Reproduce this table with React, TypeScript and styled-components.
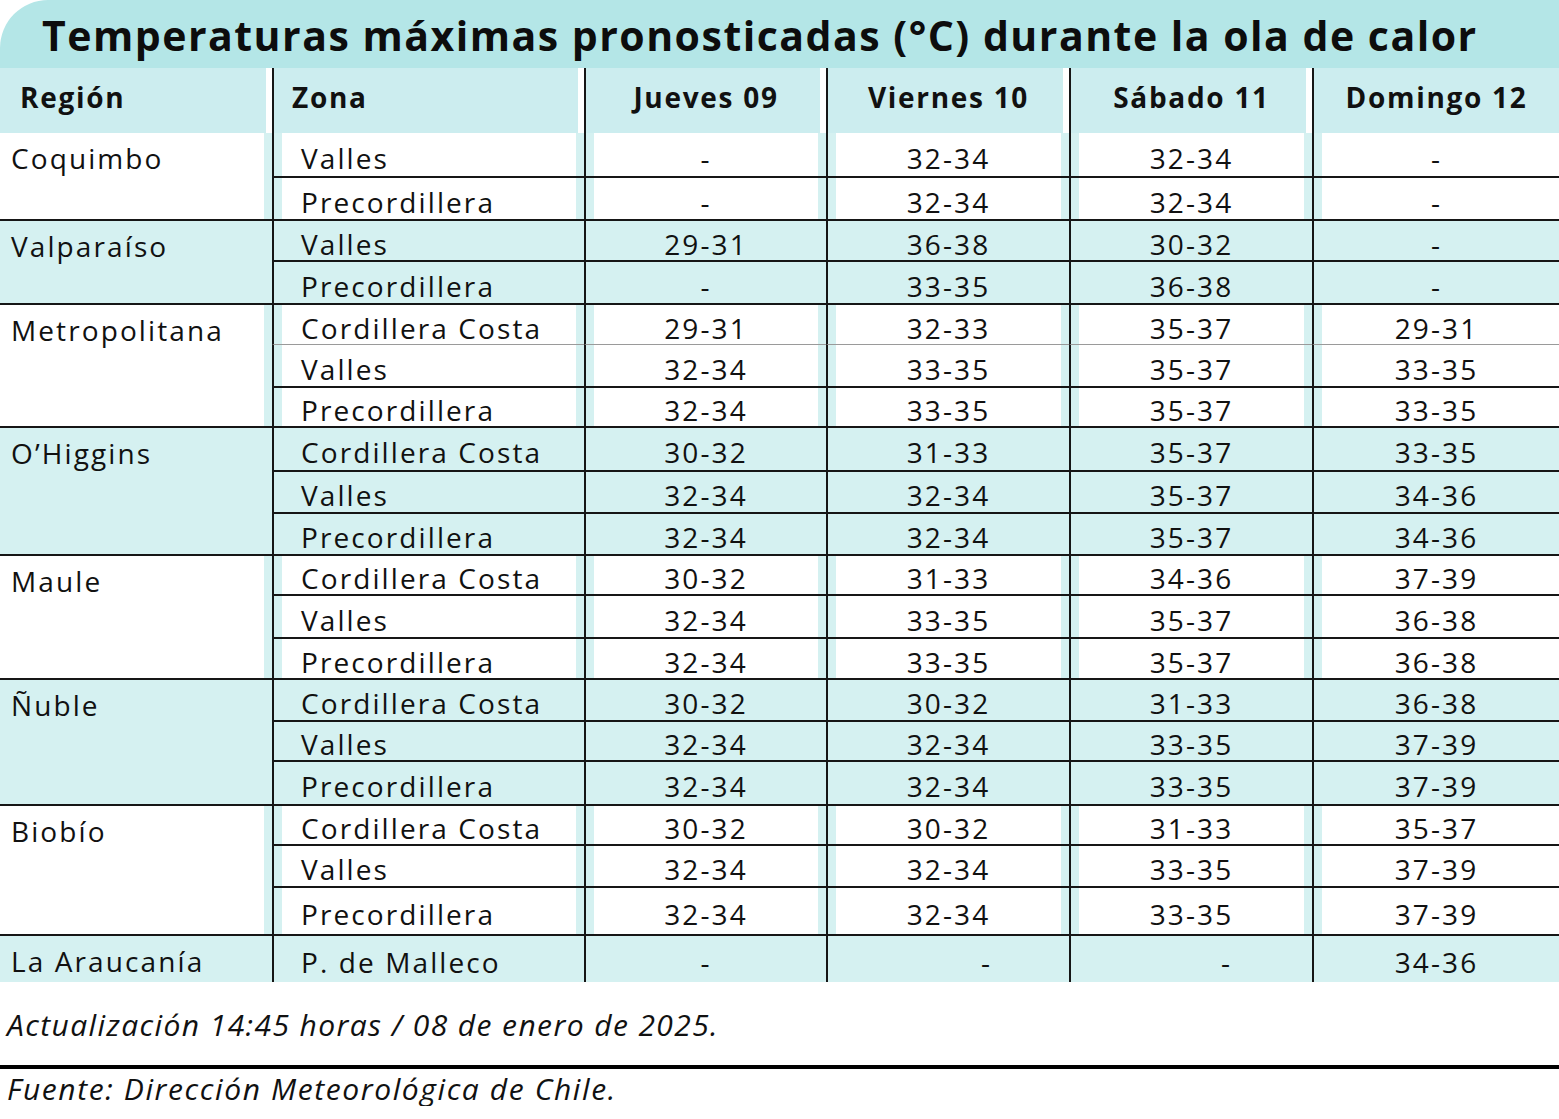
import React from 'react';
import styled, { createGlobalStyle, css } from 'styled-components';

const GlobalStyle = createGlobalStyle`
  html, body { margin: 0; padding: 0; background: #ffffff; }
  body { font-family: "Open Sans", "Noto Sans", sans-serif; color: #111; }
  * { box-sizing: border-box; }
`;

const TEAL_TITLE = '#b4e6e7';
const TEAL_HEAD = '#ccedef';
const TEAL_ROW = '#d5f1f1';
const LINE = '#161616';

const Page = styled.div`
  width: 1559px;
  display: flex;
  flex-direction: column;
`;

const TitleBar = styled.h1`
  margin: 0;
  height: 68px;
  background: ${TEAL_TITLE};
  border-top-left-radius: 48px;
  padding-left: 42px;
  font-size: 41px;
  font-weight: 700;
  letter-spacing: 1.5px;
  line-height: 70px;
  color: #0d0d0d;
  white-space: nowrap;
`;

const Table = styled.div`
  display: grid;
  grid-template-columns: 272px 312px 242px 243px 243px 247px;
  grid-template-rows:
    65px 45px 43px 41px 43px 40px 43px 40px 44px 42px 42px
    40px 43px 41px 42px 40px 44px 40px 42px 48px 46px;
`;

type CellProps = {
  $col: number;
  $teal?: boolean;
  $align?: 'left' | 'center';
};

const vertical = css<CellProps>`
  border-left: ${(p) => (p.$col > 0 ? `2px solid ${LINE}` : 'none')};
`;

const HeadCell = styled.div<CellProps>`
  ${vertical};
  background: ${TEAL_HEAD};
  display: flex;
  align-items: center;
  justify-content: ${(p) => (p.$align === 'left' ? 'flex-start' : 'center')};
  padding-left: ${(p) => (p.$align === 'left' ? (p.$col === 0 ? '20px' : '18px') : '0')};
  padding-bottom: 8px;
  font-size: 28px;
  font-weight: 700;
  letter-spacing: 1.7px;
  box-shadow: ${(p) => (p.$col < 5 ? 'inset -6px 0 0 #ffffff' : 'none')};
`;

const strips = (col: number) => {
  const parts: string[] = [];
  if (col > 0) parts.push(`inset 8px 0 0 ${TEAL_ROW}`);
  if (col < 5) parts.push(`inset -8px 0 0 ${TEAL_ROW}`);
  return parts.length ? parts.join(', ') : 'none';
};

const bodyBase = css<CellProps>`
  ${vertical};
  background: ${(p) => (p.$teal ? TEAL_ROW : '#ffffff')};
  box-shadow: ${(p) => (p.$teal ? 'none' : strips(p.$col))};
  font-size: 28px;
  letter-spacing: 2.1px;
  white-space: nowrap;
`;

const RegionCell = styled.div<CellProps & { $span: number; $end: boolean }>`
  ${bodyBase};
  grid-row: span ${(p) => p.$span};
  border-bottom: ${(p) => (p.$end ? 'none' : `2px solid ${LINE}`)};
  padding-left: 11px;
  line-height: 42px;
  padding-top: 4px;
`;

type RowCellProps = CellProps & { $rule: 'none' | 'dark' | 'light'; $shift?: number };

const RowCell = styled.div<RowCellProps>`
  ${bodyBase};
  display: flex;
  align-items: center;
  justify-content: ${(p) => (p.$align === 'left' ? 'flex-start' : 'center')};
  padding-left: ${(p) => (p.$align === 'left' ? '27px' : `${p.$shift ?? 0}px`)};
  padding-top: 6px;
  border-bottom: ${(p) =>
    p.$rule === 'none' ? 'none' : p.$rule === 'light' ? '1px solid #9a9a9a' : `2px solid ${LINE}`};
`;

const Note = styled.p`
  margin: 26px 0 0 0;
  padding-left: 7px;
  font-size: 30px;
  font-style: italic;
  line-height: 34px;
  letter-spacing: 1.4px;
  color: #111;
`;

const Rule = styled.hr`
  margin: 23px 0 0 0;
  border: none;
  height: 4px;
  background: #000;
`;

const Source = styled(Note)`
  margin-top: 3px;
  letter-spacing: 1.6px;
`;

type Row = [string, string, string, string, string];
type Group = { region: string; rows: Row[]; shifts?: number[] };

const groups: Group[] = [
  {
    region: 'Coquimbo',
    rows: [
      ['Valles', '-', '32-34', '32-34', '-'],
      ['Precordillera', '-', '32-34', '32-34', '-'],
    ],
  },
  {
    region: 'Valparaíso',
    rows: [
      ['Valles', '29-31', '36-38', '30-32', '-'],
      ['Precordillera', '-', '33-35', '36-38', '-'],
    ],
  },
  {
    region: 'Metropolitana',
    rows: [
      ['Cordillera Costa', '29-31', '32-33', '35-37', '29-31'],
      ['Valles', '32-34', '33-35', '35-37', '33-35'],
      ['Precordillera', '32-34', '33-35', '35-37', '33-35'],
    ],
  },
  {
    region: 'O’Higgins',
    rows: [
      ['Cordillera Costa', '30-32', '31-33', '35-37', '33-35'],
      ['Valles', '32-34', '32-34', '35-37', '34-36'],
      ['Precordillera', '32-34', '32-34', '35-37', '34-36'],
    ],
  },
  {
    region: 'Maule',
    rows: [
      ['Cordillera Costa', '30-32', '31-33', '34-36', '37-39'],
      ['Valles', '32-34', '33-35', '35-37', '36-38'],
      ['Precordillera', '32-34', '33-35', '35-37', '36-38'],
    ],
  },
  {
    region: 'Ñuble',
    rows: [
      ['Cordillera Costa', '30-32', '30-32', '31-33', '36-38'],
      ['Valles', '32-34', '32-34', '33-35', '37-39'],
      ['Precordillera', '32-34', '32-34', '33-35', '37-39'],
    ],
  },
  {
    region: 'Biobío',
    rows: [
      ['Cordillera Costa', '30-32', '30-32', '31-33', '35-37'],
      ['Valles', '32-34', '32-34', '33-35', '37-39'],
      ['Precordillera', '32-34', '32-34', '33-35', '37-39'],
    ],
  },
  {
    region: 'La Araucanía',
    rows: [['P. de Malleco', '-', '-', '-', '34-36']],
    shifts: [0, 0, 76, 70, 0],
  },
];

const headers = ['Región', 'Zona', 'Jueves 09', 'Viernes 10', 'Sábado 11', 'Domingo 12'];

export default function App() {
  return (
    <Page>
      <GlobalStyle />
      <TitleBar>Temperaturas máximas pronosticadas (°C) durante la ola de calor</TitleBar>
      <Table>
        {headers.map((h, i) => (
          <HeadCell key={h} $col={i} $align={i < 2 ? 'left' : 'center'}>
            {h}
          </HeadCell>
        ))}
        {groups.map((g, gi) => {
          const teal = gi % 2 === 1;
          const lastGroup = gi === groups.length - 1;
          return (
            <React.Fragment key={g.region}>
              <RegionCell $col={0} $teal={teal} $span={g.rows.length} $end={lastGroup}>
                {g.region}
              </RegionCell>
              {g.rows.map((r, ri) => {
                const lastRow = ri === g.rows.length - 1;
                const rule: 'none' | 'dark' | 'light' =
                  lastGroup && lastRow
                    ? 'none'
                    : g.region === 'Metropolitana' && ri === 0
                    ? 'light'
                    : 'dark';
                return r.map((v, ci) => (
                  <RowCell
                    key={`${g.region}-${ri}-${ci}`}
                    $col={ci + 1}
                    $teal={teal}
                    $align={ci === 0 ? 'left' : 'center'}
                    $rule={rule}
                    $shift={g.shifts ? g.shifts[ci] : 0}
                  >
                    {v}
                  </RowCell>
                ));
              })}
            </React.Fragment>
          );
        })}
      </Table>
      <Note>Actualización 14:45 horas / 08 de enero de 2025.</Note>
      <Rule />
      <Source>Fuente: Dirección Meteorológica de Chile.</Source>
    </Page>
  );
}
